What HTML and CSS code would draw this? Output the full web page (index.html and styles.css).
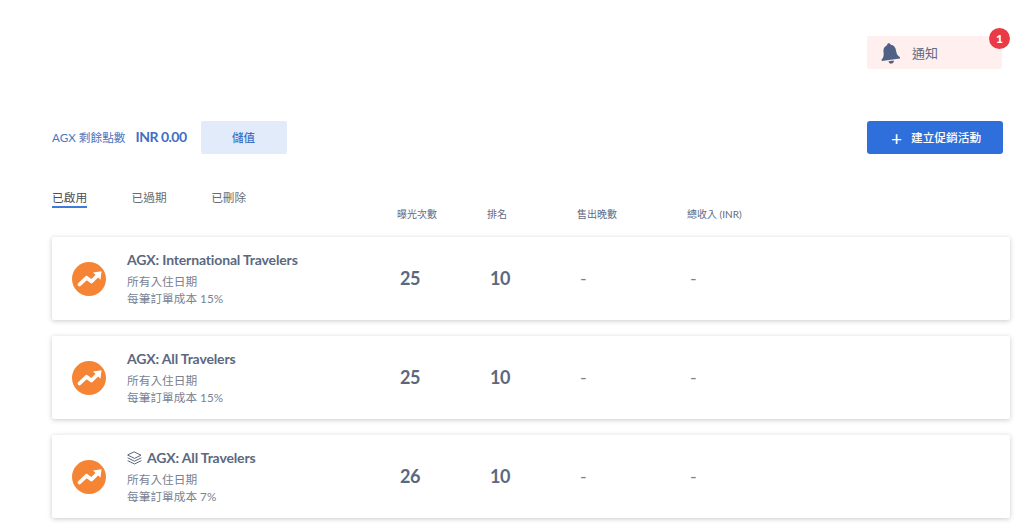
FILE: index.html
```html
<!DOCTYPE html>
<html lang="zh-Hant">
<head>
<meta charset="utf-8">
<title>AGX</title>
<link rel="stylesheet" href="styles.css">
</head>
<body>
<svg width="0" height="0" class="defs">
  <symbol id="trend" viewBox="0 0 34 34">
    <circle cx="17" cy="17" r="17" fill="#f58434"/>
    <path d="M7.500 22.500 L14.500 15.800 L19.500 19.500 L25 14" fill="none" stroke="#fff" stroke-width="3.800" stroke-linecap="round" stroke-linejoin="round"/>
    <path d="M21 10.500 L29.500 9.300 L28.500 17.800 Z" fill="#fff"/>
  </symbol>
</svg>
<div class="page">
  <header class="top">
    <div class="notice">
      <svg class="bell" width="20" height="22" viewBox="0 0 20 22"><g transform="rotate(-8 10 11)"><path d="M10 1.200c1 0 1.700.7 1.800 1.700 3 .8 4.500 3.200 4.500 6.400 0 3.500.9 5.500 3 7.200v1.300H.7v-1.300c2.100-1.700 3-3.700 3-7.200 0-3.200 1.500-5.600 4.500-6.400.1-1 .8-1.700 1.800-1.700z" fill="#4f6285"/><path d="M7.300 19h5.400a2.700 2.700 0 0 1-5.400 0z" fill="#4f6285"/></g></svg>
      <span class="notice-text">通知</span>
      <span class="badge">1</span>
    </div>
  </header>
  <section class="balance">
    <span class="balance-label">AGX 剩餘點數</span>
    <span class="balance-value">INR 0.00</span>
    <button class="topup">儲值</button>
    <button class="create"><span class="plus">+</span>建立促銷活動</button>
  </section>
  <section class="tabs-row">
    <nav class="tabs">
      <span class="tab active">已啟用</span>
      <span class="tab">已過期</span>
      <span class="tab">已刪除</span>
    </nav>
    <div class="cols">
      <span class="col c1">曝光次數</span>
      <span class="col c2">排名</span>
      <span class="col c3">售出晚數</span>
      <span class="col c4">總收入 (INR)</span>
    </div>
  </section>
  <section class="cards">
    <article class="card">
      <svg class="trend" width="34" height="34"><use href="#trend"/></svg>
      <div class="info">
        <div class="name">AGX: International Travelers</div>
        <div class="sub">所有入住日期</div>
        <div class="sub">每筆訂單成本 15%</div>
      </div>
      <div class="num c1">25</div><div class="num c2">10</div><div class="dash c3">-</div><div class="dash c4">-</div>
    </article>
    <article class="card">
      <svg class="trend" width="34" height="34"><use href="#trend"/></svg>
      <div class="info">
        <div class="name">AGX: All Travelers</div>
        <div class="sub">所有入住日期</div>
        <div class="sub">每筆訂單成本 15%</div>
      </div>
      <div class="num c1">25</div><div class="num c2">10</div><div class="dash c3">-</div><div class="dash c4">-</div>
    </article>
    <article class="card">
      <svg class="trend" width="34" height="34"><use href="#trend"/></svg>
      <div class="info">
        <div class="name"><svg class="layers" width="15" height="14" viewBox="0 0 15 14"><path d="M7.500 1 L14 4.200 L7.500 7.400 L1 4.200 Z M1 7 L7.500 10.200 L14 7 M1 9.800 L7.500 13 L14 9.800" fill="none" stroke="#5b6880" stroke-width="1" stroke-linejoin="round" stroke-linecap="round"/></svg>AGX: All Travelers</div>
        <div class="sub">所有入住日期</div>
        <div class="sub">每筆訂單成本 7%</div>
      </div>
      <div class="num c1">26</div><div class="num c2">10</div><div class="dash c3">-</div><div class="dash c4">-</div>
    </article>
  </section>
</div>
</body>
</html>
```
FILE: styles.css
```css
* { box-sizing: border-box; }
html, body { margin: 0; padding: 0; background: #fff; }
body { font-family: Lato, "Noto Sans CJK TC", sans-serif; overflow: hidden; height: 528px; }
.defs { position: absolute; }
.page { padding: 36px 14px 0 52px; width: 1024px; }
.top { display: flex; justify-content: flex-end; padding-right: 8px; height: 85px; }
.notice { position: relative; width: 135px; height: 33px; background: #fff0ef; border-radius: 2px; display: flex; align-items: center; padding-left: 13px; }
.bell { margin-right: 12px; }
.notice-text { font-size: 13px; color: #5f6b80; }
.badge { position: absolute; right: -8px; top: -8px; width: 21px; height: 21px; border-radius: 50%; background: #ea3a45; color: #fff; font-size: 12px; font-weight: 900; display: flex; align-items: center; justify-content: center; }
.balance { display: flex; align-items: center; height: 33px; padding-right: 7px; }
.balance-label { font-size: 11.7px; color: #4a76bd; margin-right: 10px; padding-bottom: 3px; }
.balance-value { font-size: 14px; font-weight: 700; color: #3f70c4; margin-right: 14px; letter-spacing: -0.5px; padding-bottom: 2px; }
.topup { width: 86px; height: 33px; padding: 0 0 2px; background: #e1ebfa; border: 0; border-radius: 2px; color: #3f70c4; font: 500 11.5px Lato, "Noto Sans CJK TC", sans-serif; }
.create { margin-left: auto; width: 136px; height: 33px; background: #2f6fdb; border: 0; border-radius: 3px; color: #fff; font: 500 11.7px Lato, "Noto Sans CJK TC", sans-serif; display: flex; align-items: center; justify-content: center; padding: 0 0 3px 2px; }
.plus { font-size: 19px; font-weight: 400; line-height: 1; margin: 4px 9px 0 0; }
.tabs-row { display: flex; height: 83px; position: relative; }
.tabs { display: flex; gap: 44.5px; padding-top: 35px; width: 345px; }
.tab { font-size: 11.7px; color: #6b6b6b; height: 19px; line-height: 17px; }
.tab.active { color: #4a4f57; border-bottom: 2px solid #3f7bdc; height: 19px; }
.cols { display: flex; padding-top: 52px; }
.col { font-size: 10px; color: #5f6b80; line-height: 16px; font-weight: 400; }
.col.c1 { width: 90px; } .col.c2 { width: 90px; } .col.c3 { width: 110px; } .col.c4 { width: 100px; }
.cards { display: flex; flex-direction: column; gap: 16px; }
.card { display: flex; align-items: center; height: 83px; background: #fff; border-radius: 2px; box-shadow: 0 1px 5px rgba(60,66,80,.28); padding-left: 20px; }
.trend { flex: none; margin-right: 21px; }
.info { width: 259px; display: flex; flex-direction: column; margin-top: 1px; }
.name { font-size: 14px; font-weight: 700; color: #5b6880; line-height: 18px; margin-bottom: 4px; display: flex; align-items: center; letter-spacing: -0.15px; }
.layers { margin-right: 5px; }
.sub { font-size: 11.7px; color: #7a8292; line-height: 17px; }
.num { font-size: 18px; font-weight: 700; color: #5b6880; padding-bottom: 1px; letter-spacing: -0.4px; }
.dash { font-size: 18px; color: #7a8292; padding-bottom: 1px; }
.num.c1 { width: 90px; margin-left: 14px; }
.num.c2 { width: 90px; }
.dash.c3 { width: 110px; }
.dash.c4 { width: 100px; }
```
